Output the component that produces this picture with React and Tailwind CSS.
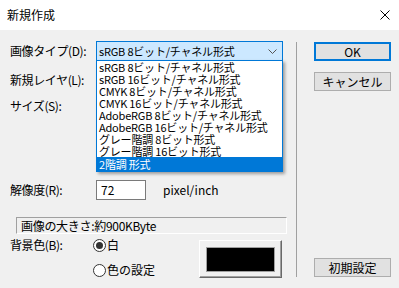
const ui = { fontFamily: "'Noto Sans CJK JP', 'Noto Sans', sans-serif" }

const formats = [
  'sRGB 8ビット/チャネル形式',
  'sRGB 16ビット/チャネル形式',
  'CMYK 8ビット/チャネル形式',
  'CMYK 16ビット/チャネル形式',
  'AdobeRGB 8ビット/チャネル形式',
  'AdobeRGB 16ビット/チャネル形式',
  'グレー階調 8ビット形式',
  'グレー階調 16ビット形式',
]

function Radio({ checked, label }) {
  return (
    <div className="flex items-center h-[14px]">
      <span className="w-[13px] h-[13px] rounded-full border border-[#333] bg-white flex items-center justify-center">
        {checked && <span className="w-[7px] h-[7px] rounded-full bg-[#333]" />}
      </span>
      <span className="ml-[1px] text-[12px] leading-[14px] text-black">{label}</span>
    </div>
  )
}

function Btn({ children, primary }) {
  return (
    <div
      className={
        'w-[77px] h-[19px] flex items-center justify-center bg-[#e1e1e1] text-[12px] leading-[12px] text-black ' +
        (primary ? 'border-2 border-[#0078d7]' : 'border border-[#adadad]')
      }
    >
      {children}
    </div>
  )
}

export default function App() {
  return (
    <div className="w-[399px] h-[288px] bg-[#f0f0f0] relative overflow-hidden text-black" style={ui}>
      {/* title bar */}
      <div className="h-[30px] bg-white flex items-center justify-between pl-[7px] pr-[9px]">
        <span className="text-[12px] leading-[12px]">新規作成</span>
        <svg width="10" height="10" viewBox="0 0 10 10" className="text-black">
          <path d="M0.5 0.5 L9.5 9.5 M9.5 0.5 L0.5 9.5" stroke="currentColor" strokeWidth="1" />
        </svg>
      </div>

      <div className="flex">
        {/* left */}
        <div className="w-[296px] pl-[10px] pt-[11px]">
          <div className="flex items-center h-[20px]">
            <span className="w-[86px] text-[12px] leading-[12px] tracking-[-0.4px]">画像タイプ(D):</span>
            <div className="w-[187px] h-[20px] bg-[#cce8ff] border border-[#0078d7] flex items-center justify-between pl-[2px] pr-[5px]">
              <span className="text-[11px] leading-[12px] tracking-[-0.2px]">sRGB 8ビット/チャネル形式</span>
              <svg width="9" height="5" viewBox="0 0 9 5">
                <path d="M0.5 0.5 L4.5 4.5 L8.5 0.5" fill="none" stroke="#555" strokeWidth="1" />
              </svg>
            </div>
          </div>
          <div className="flex items-center h-[20px] mt-[9px]">
            <span className="text-[12px] leading-[12px] tracking-[-0.4px]">新規レイヤ(L):</span>
          </div>
          <div className="flex items-center h-[20px] mt-[6px]">
            <span className="text-[12px] leading-[12px] tracking-[-0.4px]">サイズ(S):</span>
          </div>

          <div className="flex items-center h-[20px] mt-[64px]">
            <span className="w-[86px] text-[12px] leading-[12px] tracking-[-0.4px]">解像度(R):</span>
            <div className="w-[50px] h-[20px] bg-white border border-[#7a7a7a] flex items-center pl-[4px] text-[12px] leading-[12px]">
              72
            </div>
            <span className="ml-[17px] text-[12px] leading-[12px]">pixel/inch</span>
          </div>

          <div className="ml-[6px] mt-[17px] w-[271px] h-[17px] border border-t-[#a0a0a0] border-l-[#a0a0a0] border-b-white border-r-white flex items-center pl-[4px]">
            <span className="text-[12px] leading-[12px] tracking-[-0.3px]">画像の大きさ:約900KByte</span>
          </div>

          <div className="flex mt-[4px]">
            <span className="w-[83px] pt-[1px] text-[12px] leading-[12px] tracking-[-0.4px]">背景色(B):</span>
            <div className="w-[106px] flex flex-col gap-[11px]">
              <Radio checked label="白" />
              <Radio label="色の設定" />
            </div>
            <div className="mt-[2px] w-[83px] h-[38px] bg-[#f0f0f0] border border-t-white border-l-white border-b-[#696969] border-r-[#696969] shadow-[inset_-1px_-1px_0_#a0a0a0] flex items-center justify-center">
              <div className="w-[69px] h-[25px] bg-black border border-[#a0a0a0]" />
            </div>
          </div>
        </div>

        {/* separator */}
        <div className="w-px h-[235px] mt-[12px] bg-[#a0a0a0]" />

        {/* right */}
        <div className="ml-[17px] pt-[12px] flex flex-col">
          <Btn primary>OK</Btn>
          <div className="mt-[11px]">
            <Btn>キャンセル</Btn>
          </div>
          <div className="mt-[167px]">
            <Btn>初期設定</Btn>
          </div>
        </div>
      </div>

      {/* open dropdown list */}
      <div className="absolute left-[96px] top-[60px] w-[187px] bg-white border border-[#0078d7] shadow-[2px_2px_3px_rgba(0,0,0,0.35)]">
        {formats.map((f) => (
          <div key={f} className="h-[12px] pl-[2px] flex items-center text-[11px] leading-[12px] tracking-[-0.2px] whitespace-nowrap">
            {f}
          </div>
        ))}
        <div className="h-[14px] pl-[2px] bg-[#0078d7] text-white flex items-center text-[11px] leading-[12px] tracking-[-0.2px]">
          2階調 形式
        </div>
      </div>
    </div>
  )
}
